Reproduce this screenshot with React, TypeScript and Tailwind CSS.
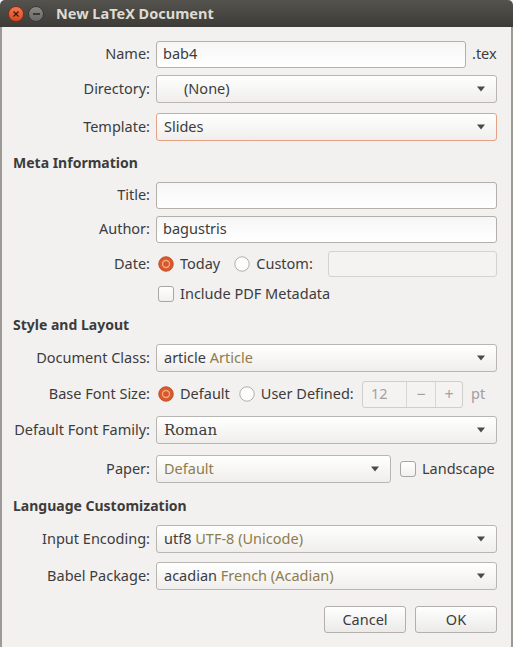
import React from 'react'

const font = { fontFamily: '"Noto Sans", "Open Sans", sans-serif' }

function Arrow() {
  return (
    <svg width="10" height="6" viewBox="0 0 10 6" className="shrink-0">
      <path d="M1 0.5 L9 0.5 L5 5.5 Z" fill="#4a4a4a" />
    </svg>
  )
}

function Radio({ checked }: { checked?: boolean }) {
  return (
    <svg width="16" height="16" viewBox="0 0 16 16" className="shrink-0">
      {checked ? (
        <>
          <circle cx="8" cy="8" r="7.3" fill="#d9592d" stroke="#b9461f" strokeWidth="0.8" />
          <circle cx="8" cy="8" r="4.2" fill="#f3a883" />
          <circle cx="8" cy="8" r="2.8" fill="#d8572a" />
        </>
      ) : (
        <circle cx="8" cy="8" r="7.2" fill="#fdfdfd" stroke="#a8a6a2" strokeWidth="0.9" />
      )}
    </svg>
  )
}

function Check() {
  return (
    <div className="w-[16px] h-[16px] rounded-[3px] border border-[#a8a6a2] bg-gradient-to-b from-white to-[#f1f0ee] shrink-0" />
  )
}

function Row({
  label,
  top,
  children,
}: {
  label?: string
  top: string
  children: React.ReactNode
}) {
  return (
    <div className={`flex items-center h-[28px] ${top}`}>
      <div className="w-[148px] text-right text-[#3c3c3c] whitespace-nowrap">{label}</div>
      <div className="ml-[6px] flex-1 flex items-center h-full">{children}</div>
    </div>
  )
}

function Entry({ value }: { value?: string }) {
  return (
    <div className="flex-1 h-[27px] rounded-[3px] border border-[#b3b0ab] bg-gradient-to-b from-[#f6f6f6] to-white flex items-center px-[6px] text-[#3c3c3c]">
      {value}
    </div>
  )
}

function Combo({
  children,
  focus,
  className = 'flex-1',
}: {
  children?: React.ReactNode
  focus?: boolean
  className?: string
}) {
  return (
    <div
      className={`${className} h-[28px] rounded-[3px] border ${focus ? 'border-[#e3a386]' : 'border-[#b9b6b1]'} bg-gradient-to-b from-white to-[#efeeec] flex items-center pl-[7px] pr-[10px] text-[#3c3c3c]`}
    >
      <div className="flex-1 whitespace-nowrap">{children}</div>
      <Arrow />
    </div>
  )
}

function Heading({ text, top }: { text: string; top: string }) {
  return (
    <div className={`h-[20px] flex items-center pl-[11px] font-bold text-[#3c3c3c] text-[14px] ${top}`}>
      {text}
    </div>
  )
}

export default function App() {
  return (
    <div className="w-[513px] h-[647px] bg-[#f2f1f0] text-[14.5px] overflow-hidden flex flex-col" style={font}>
      {/* title bar */}
      <div className="h-[27px] shrink-0 bg-gradient-to-b from-[#55534e] to-[#3c3b37] flex items-center pl-[8px] rounded-t-[5px]">
        <div className="w-[16px] h-[16px] rounded-full bg-gradient-to-b from-[#f37a50] to-[#d9471d] border border-[#8c2e12] flex items-center justify-center">
          <svg width="6" height="6" viewBox="0 0 6 6">
            <path d="M0.5 0.5 L5.5 5.5 M5.5 0.5 L0.5 5.5" stroke="#3a1a0c" strokeWidth="1.3" />
          </svg>
        </div>
        <div className="ml-[4px] w-[16px] h-[16px] rounded-full bg-gradient-to-b from-[#8a8884] to-[#6a6864] border border-[#3a3936] flex items-center justify-center">
          <div className="w-[7px] h-[2px] bg-[#3a3936]" />
        </div>
        <div className="ml-[12px] text-[#dfdbd2] font-bold text-[14.5px]">New LaTeX Document</div>
      </div>

      <div className="flex-1 border-x-2 border-[#9d9a96] pr-[14px] flex flex-col">
        <Row label="Name:" top="mt-[13px]">
          <Entry value="bab4" />
          <span className="ml-[6px] w-[25px] text-[#3c3c3c]">.tex</span>
        </Row>
        <Row label="Directory:" top="mt-[7px]">
          <Combo>
            <span className="pl-[20px]">(None)</span>
          </Combo>
        </Row>
        <Row label="Template:" top="mt-[10px]">
          <Combo focus>Slides</Combo>
        </Row>

        <Heading text="Meta Information" top="mt-[11px]" />
        <Row label="Title:" top="mt-[9px]">
          <Entry />
        </Row>
        <Row label="Author:" top="mt-[6px]">
          <Entry value="bagustris" />
        </Row>
        <Row label="Date:" top="mt-[7px]">
          <div className="ml-[2px] flex items-center">
            <Radio checked />
            <span className="ml-[6px] text-[#3c3c3c]">Today</span>
          </div>
          <div className="ml-[14px] flex items-center">
            <Radio />
            <span className="ml-[6px] text-[#3c3c3c]">Custom:</span>
          </div>
          <div className="ml-auto w-[169px] h-[26px] rounded-[3px] border border-[#d4d2ce] bg-[#f4f3f2]" />
        </Row>
        <Row top="mt-[6px] !h-[20px]">
          <div className="ml-[2px]">
            <Check />
          </div>
          <span className="ml-[6px] text-[#3c3c3c]">Include PDF Metadata</span>
        </Row>

        <Heading text="Style and Layout" top="mt-[10px]" />
        <Row label="Document Class:" top="mt-[10px]">
          <Combo>
            article <span className="text-[#8f7c4c]">Article</span>
          </Combo>
        </Row>
        <Row label="Base Font Size:" top="mt-[8px]">
          <div className="ml-[2px] flex items-center">
            <Radio checked />
            <span className="ml-[6px] text-[#3c3c3c]">Default</span>
          </div>
          <div className="ml-[9px] flex items-center">
            <Radio />
            <span className="ml-[6px] text-[#3c3c3c]">User Defined:</span>
          </div>
          <div className="ml-auto flex items-center">
            <div className="w-[101px] h-[27px] rounded-[3px] border border-[#d0cecb] bg-[#f4f3f2] flex text-[#a3a19e]">
              <div className="w-[43px] flex items-center pl-[8px]">12</div>
              <div className="w-[29px] border-l border-[#d8d6d2] flex items-center justify-center text-[16px]">−</div>
              <div className="flex-1 border-l border-[#d8d6d2] flex items-center justify-center text-[16px]">+</div>
            </div>
            <span className="ml-[8px] w-[26px] text-[#a09e9b]">pt</span>
          </div>
        </Row>
        <Row label="Default Font Family:" top="mt-[8px]">
          <Combo>
            <span className="text-[15px]" style={{ fontFamily: '"DejaVu Serif", serif' }}>
              Roman
            </span>
          </Combo>
        </Row>
        <Row label="Paper:" top="mt-[11px]">
          <Combo className="w-[235px]">
            <span className="text-[#8f7c4c]">Default</span>
          </Combo>
          <div className="ml-[9px]">
            <Check />
          </div>
          <span className="ml-[6px] text-[#3c3c3c]">Landscape</span>
        </Row>

        <Heading text="Language Customization" top="mt-[12px]" />
        <Row label="Input Encoding:" top="mt-[10px]">
          <Combo>
            utf8 <span className="text-[#8f7c4c]">UTF-8 (Unicode)</span>
          </Combo>
        </Row>
        <Row label="Babel Package:" top="mt-[9px]">
          <Combo>
            acadian <span className="text-[#8f7c4c]">French (Acadian)</span>
          </Combo>
        </Row>

        <div className="mt-[16px] flex justify-end gap-[9px]">
          <button className="w-[82px] h-[27px] rounded-[3px] border border-[#b3b0ab] bg-gradient-to-b from-white to-[#ebeae8] text-[#3c3c3c]">
            Cancel
          </button>
          <button className="w-[82px] h-[27px] rounded-[3px] border border-[#b3b0ab] bg-gradient-to-b from-white to-[#ebeae8] text-[#3c3c3c]">
            OK
          </button>
        </div>
      </div>
    </div>
  )
}
